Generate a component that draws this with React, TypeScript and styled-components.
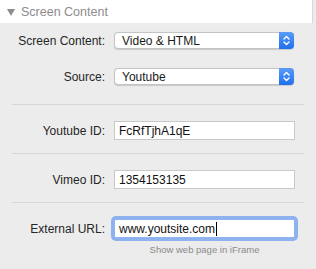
import React from "react";
import styled, { createGlobalStyle } from "styled-components";

const GlobalStyle = createGlobalStyle`
  body {
    margin: 0;
    background: #ececec;
    font-family: "Liberation Sans", Arial, sans-serif;
    -webkit-font-smoothing: antialiased;
  }
`;

const Panel = styled.div`
  width: 316px;
  height: 269px;
  background: #ececec;
  overflow: hidden;
`;

const Header = styled.div`
  height: 23px;
  width: 313px;
  background: #ffffff;
  border-right: 1px solid #d9d9d9;
  display: flex;
  align-items: center;
  gap: 6px;
  padding-left: 7px;
  box-sizing: border-box;
  color: #8c8c8c;
  font-size: 12.5px;
`;

const Triangle = styled.span`
  width: 0;
  height: 0;
  border-left: 4px solid transparent;
  border-right: 4px solid transparent;
  border-top: 7px solid #8c8c8c;
  margin-top: 1px;
`;

const Section = styled.div<{ $first?: boolean }>`
  margin: 0 12px 0 12px;
  padding: ${(p) => (p.$first ? "9px 0 19px" : "16px 0 13px")};
  border-top: ${(p) => (p.$first ? "none" : "1px solid #d6d6d6")};
  display: flex;
  flex-direction: column;
  gap: 19px;
`;

const Row = styled.div`
  display: grid;
  grid-template-columns: 93px 181px;
  column-gap: 9px;
  row-gap: 6px;
  align-items: center;
`;

const Label = styled.div`
  text-align: right;
  font-size: 12px;
  color: #262626;
`;

const Select = styled.div`
  position: relative;
  width: 180px;
  height: 17px;
  box-sizing: border-box;
  background: #ffffff;
  border: 1px solid #c4c4c4;
  border-radius: 4px;
  box-shadow: 0 0.5px 1px rgba(0, 0, 0, 0.15);
  display: flex;
  align-items: center;
  padding-left: 7px;
  font-size: 12px;
  color: #1a1a1a;
`;

const Stepper = styled.span`
  position: absolute;
  right: -1px;
  top: -1px;
  bottom: -1px;
  width: 15px;
  border-radius: 0 4px 4px 0;
  background: linear-gradient(#5a9cf8, #1f6fec);
  display: flex;
  align-items: center;
  justify-content: center;
`;

const Field = styled.div<{ $focused?: boolean }>`
  width: 181px;
  height: 19px;
  box-sizing: border-box;
  background: #ffffff;
  border: 1px solid ${(p) => (p.$focused ? "#8fb4f2" : "#c9c9c9")};
  box-shadow: ${(p) => (p.$focused ? "0 0 0 3px #8eb1f0" : "none")};
  border-radius: ${(p) => (p.$focused ? "2px" : "0")};
  display: flex;
  align-items: center;
  padding-left: 4px;
  font-size: 12px;
  color: #111111;
`;

const Caret = styled.span`
  width: 1px;
  height: 14px;
  background: #000000;
  margin-left: 1px;
`;

const Hint = styled.div`
  grid-column: 2;
  text-align: center;
  font-size: 9.5px;
  color: #8a8a8a;
`;

const Chevrons = () => (
  <svg width="9" height="11" viewBox="0 0 9 11">
    <path
      d="M2 4 L4.5 1.5 L7 4 M2 7 L4.5 9.5 L7 7"
      fill="none"
      stroke="#ffffff"
      strokeWidth="1.4"
      strokeLinecap="round"
      strokeLinejoin="round"
    />
  </svg>
);

const App: React.FC = () => {
  return (
    <Panel>
      <GlobalStyle />
      <Header>
        <Triangle />
        Screen Content
      </Header>

      <Section $first>
        <Row>
          <Label>Screen Content:</Label>
          <Select>
            Video &amp; HTML
            <Stepper>
              <Chevrons />
            </Stepper>
          </Select>
        </Row>
        <Row>
          <Label>Source:</Label>
          <Select>
            Youtube
            <Stepper>
              <Chevrons />
            </Stepper>
          </Select>
        </Row>
      </Section>

      <Section>
        <Row>
          <Label>Youtube ID:</Label>
          <Field>FcRfTjhA1qE</Field>
        </Row>
      </Section>

      <Section>
        <Row>
          <Label>Vimeo ID:</Label>
          <Field>1354153135</Field>
        </Row>
      </Section>

      <Section>
        <Row>
          <Label>External URL:</Label>
          <Field $focused>
            www.youtsite.com
            <Caret />
          </Field>
          <Hint>Show web page in iFrame</Hint>
        </Row>
      </Section>
    </Panel>
  );
};

export default App;
